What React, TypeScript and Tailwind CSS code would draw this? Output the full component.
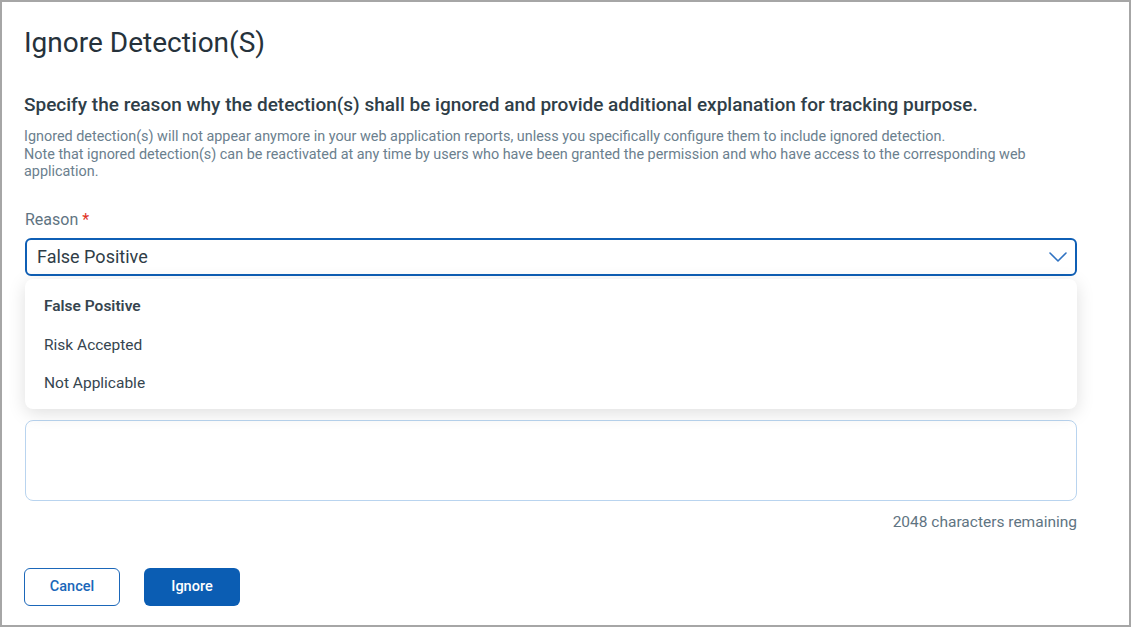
import React from "react";

const options = ["False Positive", "Risk Accepted", "Not Applicable"];

const ChevronDown = () => (
  <svg width="18" height="10" viewBox="0 0 18 10" fill="none">
    <polyline points="1,1 9,9 17,1" stroke="#2f72c2" strokeWidth="1.6" strokeLinejoin="round" strokeLinecap="round" />
  </svg>
);

export default function App() {
  return (
    <div
      className="w-[1131px] h-[627px] border-2 border-[#a6a6a6] bg-white pl-[23px] pr-[52px] pt-[24px]"
      style={{ fontFamily: "Roboto, 'Noto Sans', sans-serif" }}
    >
      <h1 className="-ml-[1px] text-[28px] leading-[34px] text-[#26323b]">Ignore Detection(S)</h1>

      <h2 className="-ml-[1px] mt-[33px] text-[19px] leading-[24px] font-medium text-[#2f3e48]">
        Specify the reason why the detection(s) shall be ignored and provide additional explanation for tracking purpose.
      </h2>

      <p className="-ml-[1px] mt-[11px] text-[14.4px] leading-[17.5px] text-[#6b808e]">
        Ignored detection(s) will not appear anymore in your web application reports, unless you specifically configure them to include ignored detection.
        <br />
        Note that ignored detection(s) can be reactivated at any time by users who have been granted the permission and who have access to the corresponding web application.
      </p>

      <div className="mt-[29px] text-[16px] leading-[20px] text-[#5f7482]">
        Reason <span className="text-[#e0321f]">*</span>
      </div>

      <div className="relative mt-[8px]">
        <div className="h-[38px] flex items-center justify-between rounded-md border-2 border-[#0f5fb5] pl-[10px] pr-[8px]">
          <span className="text-[18px] text-[#2f3d47]">False Positive</span>
          <ChevronDown />
        </div>

        <div className="absolute left-0 right-0 top-[41px] z-10 rounded-lg bg-white pt-[9px] pb-[6px] shadow-[0_4px_18px_rgba(0,0,0,0.13)]">
          {options.map((o, i) => (
            <div
              key={o}
              className={`h-[38.5px] flex items-center pl-[19px] text-[15.5px] text-[#36454f] ${i === 0 ? "font-semibold" : ""}`}
            >
              {o}
            </div>
          ))}
        </div>
      </div>

      <div className="mt-[144px] h-[81px] rounded-lg border border-[#b9d4ef]" />

      <div className="mt-[11px] text-right text-[15.5px] leading-[20px] text-[#5f7482]">2048 characters remaining</div>

      <div className="mt-[36px] -ml-[1px] flex gap-[24px]">
        <button className="w-[96px] h-[38px] rounded-md border border-[#1b67b9] bg-white text-[14.5px] font-medium text-[#1b67b9]">
          Cancel
        </button>
        <button className="w-[96px] h-[38px] rounded-md bg-[#0b5db3] text-[14.5px] font-medium text-white">
          Ignore
        </button>
      </div>
    </div>
  );
}
